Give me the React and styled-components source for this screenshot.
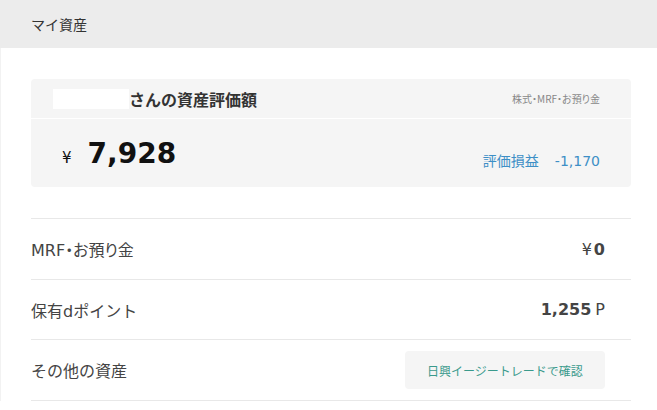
import styled, { createGlobalStyle } from "styled-components";

const GlobalStyle = createGlobalStyle`
  body {
    margin: 0;
    background: #fff;
    font-family: "DejaVu Sans", "Noto Sans CJK JP", sans-serif;
    color: #333;
  }
`;

const rows = [
  { label: "MRF・お預り金", kind: "yen", value: "0", tight: true },
  { label: "保有dポイント", kind: "point", value: "1,255" },
  { label: "その他の資産", kind: "link", value: "日興イージートレードで確認" },
];

const App = () => {
  return (
    <Page>
      <GlobalStyle />
      <Header>マイ資産</Header>
      <Body>
        <Card>
          <CardHead>
            <Owner>
              <Masked />
              <OwnerText>さんの資産評価額</OwnerText>
            </Owner>
            <Note>株式・MRF・お預り金</Note>
          </CardHead>
          <CardMain>
            <Total>
              <Yen>¥</Yen>
              <Amount>7,928</Amount>
            </Total>
            <Profit>
              評価損益<ProfitValue>-1,170</ProfitValue>
            </Profit>
          </CardMain>
        </Card>
        <List>
          {rows.map((r, i) => (
            <Row key={r.label} $tall={i !== 1}>
              <Label $tight={r.tight}>{r.label}</Label>
              {r.kind === "yen" && (
                <Value>
                  <Unit>¥</Unit>
                  <Strong>{r.value}</Strong>
                </Value>
              )}
              {r.kind === "point" && (
                <Value>
                  <Strong>{r.value}</Strong>
                  <Unit $after>P</Unit>
                </Value>
              )}
              {r.kind === "link" && <LinkButton>{r.value}</LinkButton>}
            </Row>
          ))}
        </List>
      </Body>
    </Page>
  );
};

const Page = styled.div`
  width: 657px;
  height: 410px;
  overflow: hidden;
`;

const Header = styled.div`
  height: 48px;
  background: #ececec;
  display: flex;
  align-items: center;
  padding-left: 31px;
  font-family: "Noto Sans CJK JP", sans-serif;
  font-size: 14px;
  color: #333;
`;

const Body = styled.div`
  padding: 31px 26px 0 30px;
  border-left: 1px solid #f2f2f2;
`;

const Card = styled.div`
  background: #f5f5f5;
  border-radius: 4px;
`;

const CardHead = styled.div`
  height: 39px;
  border-bottom: 1px solid #fff;
  display: flex;
  align-items: center;
  justify-content: space-between;
  padding: 0 31px 0 22px;
`;

const Owner = styled.div`
  display: flex;
  align-items: center;
`;

const Masked = styled.span`
  width: 76px;
  height: 20px;
  background: #fff;
`;

const OwnerText = styled.span`
  font-family: "Noto Sans CJK JP", sans-serif;
  font-weight: 700;
  font-size: 16px;
  color: #333;
`;

const Note = styled.span`
  font-family: "Noto Sans CJK JP", sans-serif;
  font-feature-settings: "palt";
  font-size: 10px;
  color: #888;
`;

const CardMain = styled.div`
  height: 68px;
  display: flex;
  align-items: center;
  justify-content: space-between;
  padding: 0 31px 0 31px;
`;

const Total = styled.div`
  display: flex;
  align-items: baseline;
  gap: 16px;
`;

const Yen = styled.span`
  font-size: 15px;
  color: #111;
`;

const Amount = styled.span`
  font-size: 28px;
  font-weight: 700;
  color: #111;
`;

const Profit = styled.div`
  font-size: 14px;
  color: #3d8fc6;
  padding-top: 14px;
`;

const ProfitValue = styled.span`
  margin-left: 16px;
`;

const List = styled.div`
  margin-top: 31px;
  border-top: 1px solid #e8e8e8;
`;

const Row = styled.div`
  height: ${(p) => (p.$tall ? "60px" : "59px")};
  border-bottom: 1px solid #e8e8e8;
  display: flex;
  align-items: center;
  justify-content: space-between;
  padding-right: 26px;
`;

const Label = styled.span`
  font-size: 16px;
  color: #444;
  font-feature-settings: ${(p) => (p.$tight ? '"palt"' : "normal")};
`;

const Value = styled.span`
  display: flex;
  align-items: baseline;
  font-size: 16px;
  color: #444;
`;

const Unit = styled.span`
  font-weight: 400;
  margin: ${(p) => (p.$after ? "0 0 0 4px" : "0 2px 0 0")};
`;

const Strong = styled.span`
  font-weight: 700;
`;

const LinkButton = styled.button`
  width: 200px;
  height: 38px;
  border: none;
  border-radius: 4px;
  background: #f5f5f5;
  font-family: "Noto Sans CJK JP", sans-serif;
  font-size: 12px;
  color: #3a9a8c;
  cursor: pointer;
`;

export default App;
